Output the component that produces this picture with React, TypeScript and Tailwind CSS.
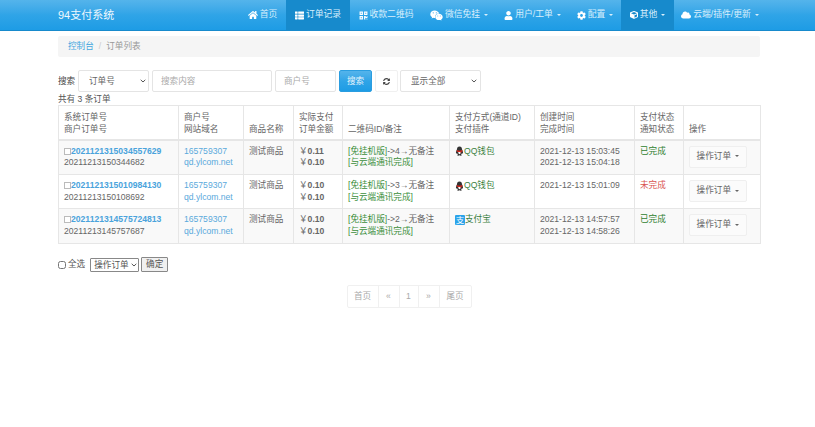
import React from "react";
import { FaHome, FaThList, FaQrcode, FaWeixin, FaUser, FaCog, FaCube, FaCloud, FaSyncAlt } from "react-icons/fa";

const font = { fontFamily: '"Liberation Sans","Noto Sans CJK SC",sans-serif' };

function Caret() {
  return <span className="ml-[2px] inline-block w-0 h-0 border-x-[2.5px] border-x-transparent border-t-[2.5px] border-t-current align-middle" />;
}

function Chevron({ right }: { right: string }) {
  return (
    <svg width="6" height="4" viewBox="0 0 6 4" className={`absolute top-1/2 -translate-y-1/2 pointer-events-none ${right}`}>
      <path d="M0.700 0.800 3 3 5.300 0.800" fill="none" stroke="#555" strokeWidth="1" />
    </svg>
  );
}

function NavItem({ icon, label, caret, active, w }: { icon: React.ReactNode; label: string; caret?: boolean; active?: boolean; w: string }) {
  return (
    <div className={`${w} h-full flex items-center justify-center gap-[2px] whitespace-nowrap ${active ? "bg-[#178acc]" : ""}`}>
      {icon}
      <span>{label}</span>
      {caret && <Caret />}
    </div>
  );
}

function QQIcon() {
  return (
    <svg width="9" height="10" viewBox="0 0 18 20" className="shrink-0">
      <path d="M9 1C5.500 1 4 3.800 4 6.500 3 9 1.500 12 2 15c.7.8 1.500-.6 2-1.200.3 1.500 1 2.400 2 3.200-1 .6-1.600 1.200-1 2 1 .7 3 .5 4-.5 1 1 3 1.200 4 .5.6-.8 0-1.400-1-2 1-.8 1.700-1.700 2-3.200.5.6 1.300 2 2 1.200.5-3-1-6-2-8.500C14 3.800 12.500 1 9 1z" fill="#333" />
      <path d="M6 10c1 4 0 5 3 6.500 3-1.500 2-2.500 3-6.500z" fill="#fff" />
      <path d="M3.500 8c3.500 2 7.500 2 11 0l.5 3-2.500.5V15l-2-3c-2.500.3-4 0-7-1z" fill="#d9261c" />
    </svg>
  );
}

function AliIcon() {
  return (
    <span className="inline-flex w-[10px] h-[10px] items-center justify-center bg-[#2ba3ea] rounded-[1px] text-white text-[8.500px] leading-none shrink-0">支</span>
  );
}

const th = "border border-[#e6e6e6] border-b-[2px] px-[5px] pb-[4px] align-bottom text-left font-normal leading-[12px]";
const td = "border border-[#e6e6e6] px-[5px] pt-[5px] align-top leading-[11.7px]";

type Row = {
  sys: string; mer: string; a: string; b: string; rem: string;
  pay: "qq" | "ali"; t1: string; t2: string; done: boolean;
};
const rows: Row[] = [
  { sys: "2021121315034557629", mer: "20211213150344682", a: "0.11", b: "0.10", rem: "->4→无备注", pay: "qq", t1: "2021-12-13 15:03:45", t2: "2021-12-13 15:04:18", done: true },
  { sys: "2021121315010984130", mer: "20211213150108692", a: "0.10", b: "0.10", rem: "->3→无备注", pay: "qq", t1: "2021-12-13 15:01:09", t2: "", done: false },
  { sys: "2021121314575724813", mer: "20211213145757687", a: "0.10", b: "0.10", rem: "->2→无备注", pay: "ali", t1: "2021-12-13 14:57:57", t2: "2021-12-13 14:58:26", done: true },
];

export default function App() {
  return (
    <div className="min-h-[427px] bg-white text-[#666] text-[8.6px]" style={font}>
      <header className="h-[31px] px-[58px] flex items-stretch justify-between text-white bg-gradient-to-b from-[#54b4eb] via-[#2fa4e7] to-[#1d9ce5] border-b border-[#178acc]">
        <div className="flex items-center text-[11px] text-[#eef8fe]">94支付系统</div>
        <nav className="flex items-stretch mr-[-9px] text-[8.800px] text-[#d9effc]">
          <NavItem w="w-[47px]" icon={<FaHome size={10} color="#fff" />} label="首页" />
          <NavItem w="w-[64px]" active icon={<FaThList size={9} color="#fff" />} label="订单记录" />
          <NavItem w="w-[72px]" icon={<FaQrcode size={9} color="#fff" />} label="收款二维码" />
          <NavItem w="w-[74px]" icon={<FaWeixin size={13} color="#fff" />} label="微信免挂" caret />
          <NavItem w="w-[73px]" icon={<FaUser size={9} color="#fff" />} label="用户/工单" caret />
          <NavItem w="w-[52px]" icon={<FaCog size={9} color="#fff" />} label="配置" caret />
          <NavItem w="w-[53px]" active icon={<FaCube size={8} color="#fff" />} label="其他" caret />
          <NavItem w="w-[92px]" icon={<FaCloud size={10} color="#fff" />} label="云端/插件/更新" caret />
        </nav>
      </header>

      <main className="px-[58px] w-[818px]">
        <div className="w-[702px]">
          <div className="mt-[5px] h-[21px] bg-[#f5f5f5] rounded-[2px] px-[10px] flex items-center gap-[5px] text-[#999]">
            <span className="text-[#45a8e0]">控制台</span>
            <span className="text-[#ccc]">/</span>
            <span>订单列表</span>
          </div>

          <form className="mt-[13px] h-[22px] flex items-stretch text-[8.6px]">
            <label className="w-[20px] flex items-center text-[#444]">搜索</label>
            <div className="relative w-[71px] flex">
              <select className="appearance-none w-full border border-[#e4e4e4] rounded-[2px] pl-[10px] bg-white text-[#666]">
                <option>订单号</option>
              </select>
              <Chevron right="right-[3px]" />
            </div>
            <input placeholder="搜索内容" className="ml-[3px] w-[120px] border border-[#e4e4e4] rounded-[2px] px-[8px] placeholder:text-[#aaa]" />
            <input placeholder="商户号" className="ml-[3px] w-[61px] border border-[#e4e4e4] rounded-[2px] px-[8px] placeholder:text-[#aaa]" />
            <button type="button" className="ml-[3px] w-[33px] rounded-[2px] text-[#e8f5fd] bg-gradient-to-b from-[#54b4eb] via-[#2fa4e7] to-[#1d9ce5] border border-[#2a9de0]">搜索</button>
            <button type="button" className="ml-[3px] w-[23px] flex items-center justify-center rounded-[2px] border border-[#f0f0f0] bg-white text-[#444]">
              <FaSyncAlt size={7} />
            </button>
            <div className="relative ml-[2px] w-[81px] flex">
              <select className="appearance-none w-full border border-[#e4e4e4] rounded-[2px] pl-[10px] bg-white text-[#666]">
                <option>显示全部</option>
              </select>
              <Chevron right="right-[4px]" />
            </div>
          </form>

          <div className="mt-px h-[12px] leading-[12px] text-[#555]">共有 3 条订单</div>

          <table className="w-full table-fixed border-collapse border border-[#e6e6e6]">
            <colgroup>
              <col className="w-[120px]" />
              <col className="w-[65px]" />
              <col className="w-[50px]" />
              <col className="w-[49px]" />
              <col className="w-[107px]" />
              <col className="w-[85px]" />
              <col className="w-[100px]" />
              <col className="w-[49px]" />
              <col className="w-[77px]" />
            </colgroup>
            <thead>
              <tr className="h-[34px]">
                <th className={th}>系统订单号<br />商户订单号</th>
                <th className={th}>商户号<br />网站域名</th>
                <th className={th}>商品名称</th>
                <th className={th}>实际支付<br />订单金额</th>
                <th className={th}>二维码ID/备注</th>
                <th className={th}>支付方式(通道ID)<br />支付插件</th>
                <th className={th}>创建时间<br />完成时间</th>
                <th className={th}>支付状态<br />通知状态</th>
                <th className={th}>操作</th>
              </tr>
            </thead>
            <tbody>
              {rows.map((r, i) => (
                <tr key={r.sys} className={i % 2 === 0 ? "h-[35px] bg-[#f9f9f9]" : "h-[34px] bg-white"}>
                  <td className={td}>
                    <div className="flex items-center">
                      <input type="checkbox" className="appearance-none w-[7px] h-[7px] border border-[#bbb] bg-white shrink-0" />
                      <b className="text-[#4aa3dc]">{r.sys}</b>
                    </div>
                    <div>{r.mer}</div>
                  </td>
                  <td className={`${td} text-[#5aa9dc]`}>165759307<br />qd.ylcom.net</td>
                  <td className={td}>测试商品</td>
                  <td className={td}>
                    <div>￥<b>{r.a}</b></div>
                    <div>￥<b>{r.b}</b></div>
                  </td>
                  <td className={td}>
                    <div className="whitespace-nowrap"><span className="text-[#3c8f3c]">[免挂机版]</span>{r.rem}</div>
                    <div className="text-[#3c8f3c]">[与云端通讯完成]</div>
                  </td>
                  <td className={td}>
                    <div className="flex items-center text-[#3a7f3e]">
                      {r.pay === "qq" ? <QQIcon /> : <AliIcon />}
                      <span>{r.pay === "qq" ? "QQ钱包" : "支付宝"}</span>
                    </div>
                  </td>
                  <td className={td}>{r.t1}<br />{r.t2}</td>
                  <td className={`${td} ${r.done ? "text-[#2f7f2f]" : "text-[#d9534f]"}`}>{r.done ? "已完成" : "未完成"}</td>
                  <td className={td}>
                    <button type="button" className="w-[58px] h-[22px] border border-[#efefef] rounded-[2px] bg-[#fbfbfb] text-[#666] whitespace-nowrap">
                      操作订单 <Caret />
                    </button>
                  </td>
                </tr>
              ))}
            </tbody>
          </table>

          <div className="mt-[13px] flex items-center h-[15px] text-[#555]">
            <input type="checkbox" className="w-[8px] h-[8px] m-0" />
            <span className="ml-[2px]">全选</span>
            <div className="relative ml-[5px] w-[49px] h-[14px] flex">
              <select className="appearance-none w-full text-[8.6px] border border-[#888] rounded-[1px] bg-white pl-[3px]">
                <option>操作订单</option>
              </select>
              <Chevron right="right-[2px]" />
            </div>
            <button type="button" className="ml-[2px] w-[27px] h-[15px] border border-[#888] rounded-[1px] bg-[#f0f0f0]">确定</button>
          </div>

          <div className="mt-[13px] flex justify-center">
            <div className="flex h-[23px] border border-[#f0f0f0] rounded-[2px] text-[#aaa] divide-x divide-[#f0f0f0]">
              <span className="w-[31px] flex items-center justify-center">首页</span>
              <span className="w-[21px] flex items-center justify-center">«</span>
              <span className="w-[19px] flex items-center justify-center">1</span>
              <span className="w-[21px] flex items-center justify-center">»</span>
              <span className="w-[31px] flex items-center justify-center">尾页</span>
            </div>
          </div>
        </div>
      </main>
    </div>
  );
}
